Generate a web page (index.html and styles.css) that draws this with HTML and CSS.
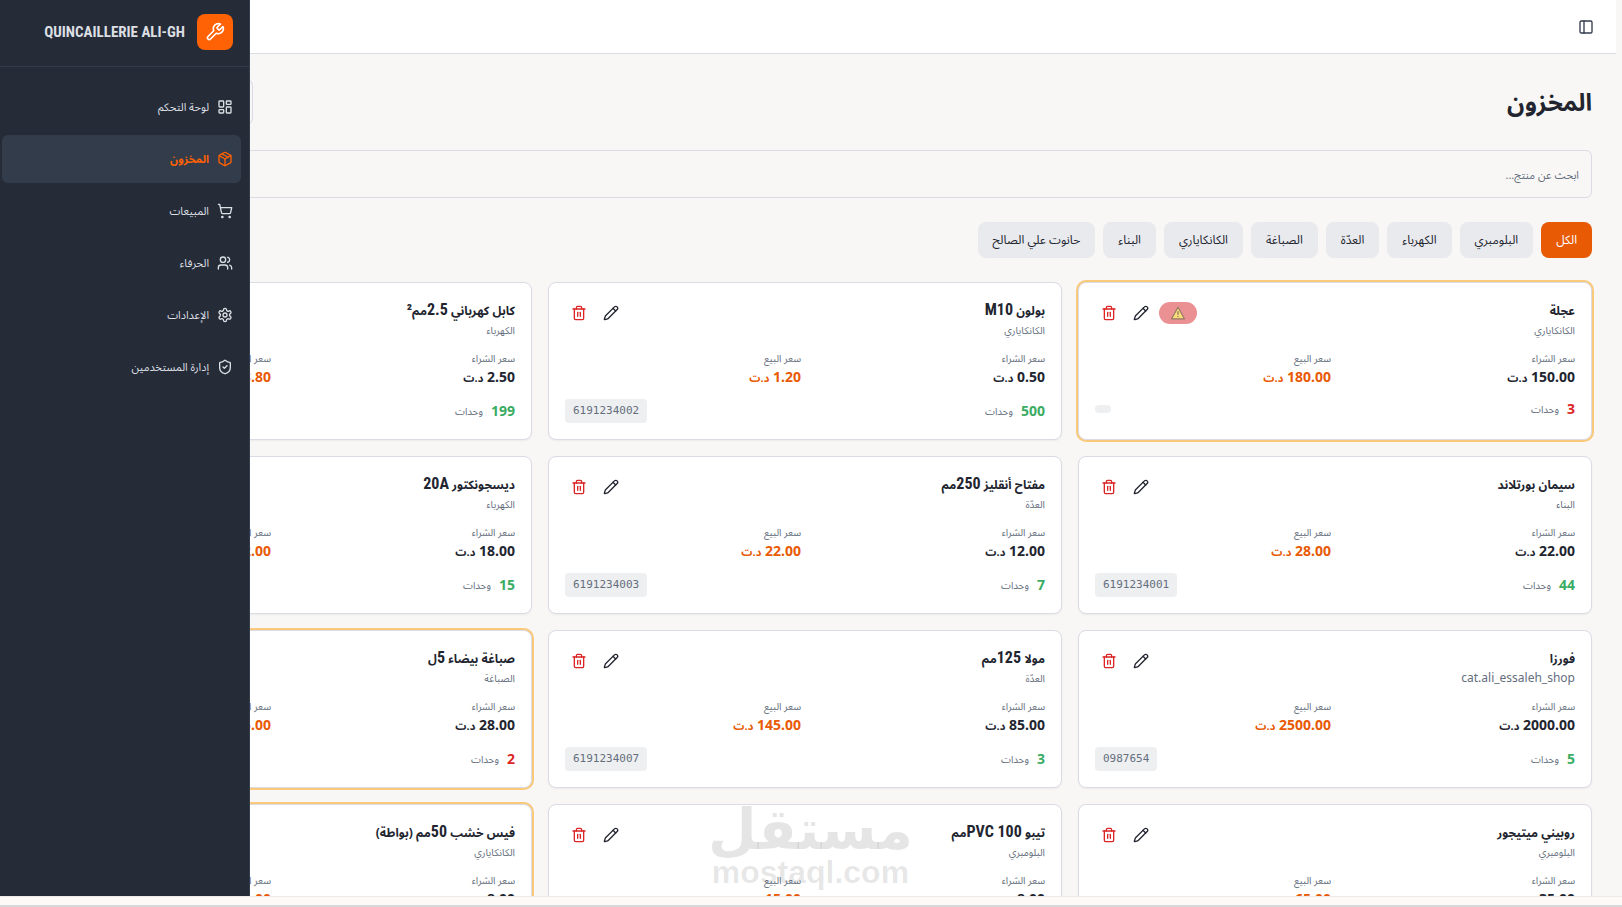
FILE: index.html
```
<!DOCTYPE html>
<html lang="ar" dir="rtl">
<head>
    <meta charset="UTF-8">
    <meta name="viewport" content="width=device-width, initial-scale=1.0">
    <title>المخزون</title>
    <link rel="stylesheet" href="styles.css">
</head>
<body>
    <!-- Shared icons -->
    <svg class="sprite" aria-hidden="true">
        <symbol id="icon-pencil" viewBox="0 0 24 24">
            <path d="M21.174 6.812a1 1 0 0 0-3.986-3.987L3.842 16.174a2 2 0 0 0-.5.83l-1.321 4.352a.5.5 0 0 0 .623.622l4.353-1.32a2 2 0 0 0 .83-.497z"/>
            <path d="m15 5 4 4"/>
        </symbol>
        <symbol id="icon-trash" viewBox="0 0 24 24">
            <path d="M3 6h18"/>
            <path d="M19 6v14c0 1-1 2-2 2H7c-1 0-2-1-2-2V6"/>
            <path d="M8 6V4c0-1 1-2 2-2h4c1 0 2 1 2 2v2"/>
            <path d="M10 11v6"/>
            <path d="M14 11v6"/>
        </symbol>
    </svg>

    <div class="app">
        <div class="page">
            <header class="topbar">
                <button class="panel-toggle" type="button" aria-label="القائمة">
                    <svg class="icon" viewBox="0 0 24 24"><rect x="3" y="3" width="18" height="18" rx="2"/><path d="M9 3v18"/></svg>
                </button>
            </header>
            <main class="content">
                <div class="page-head">
                    <h1>المخزون</h1>
                    <button class="head-action" type="button" aria-label="إضافة منتج"></button>
                </div>
                <input class="search" type="search" placeholder="ابحث عن منتج..." aria-label="ابحث عن منتج">
                <div class="chips">
                    <button class="chip active" type="button">الكل</button>
                    <button class="chip" type="button">البلومبري</button>
                    <button class="chip" type="button">الكهرباء</button>
                    <button class="chip" type="button">العدّة</button>
                    <button class="chip" type="button">الصباغة</button>
                    <button class="chip" type="button">الكانكاياري</button>
                    <button class="chip" type="button">البناء</button>
                    <button class="chip" type="button">حانوت علي الصالح</button>
                </div>
                <div class="products" id="products"></div>
            </main>
        </div>

        <aside class="sidebar">
            <div class="brand">
                <span class="brand-logo">
                    <svg class="icon" viewBox="0 0 24 24"><path d="M14.7 6.3a1 1 0 0 0 0 1.4l1.6 1.6a1 1 0 0 0 1.4 0l3.77-3.77a6 6 0 0 1-7.94 7.94l-6.91 6.91a2.12 2.12 0 0 1-3-3l6.91-6.91a6 6 0 0 1 7.94-7.94l-3.76 3.76z"/></svg>
                </span>
                <span class="brand-name">QUINCAILLERIE ALI-GH</span>
            </div>
            <nav class="nav">
                <a href="#dashboard">
                    <svg class="icon" viewBox="0 0 24 24"><rect x="3" y="3" width="7" height="9" rx="1"/><rect x="14" y="3" width="7" height="5" rx="1"/><rect x="14" y="12" width="7" height="9" rx="1"/><rect x="3" y="16" width="7" height="5" rx="1"/></svg>
                    لوحة التحكم
                </a>
                <a href="#stock" class="active">
                    <svg class="icon" viewBox="0 0 24 24"><path d="m7.5 4.27 9 5.15"/><path d="M21 8a2 2 0 0 0-1-1.73l-7-4a2 2 0 0 0-2 0l-7 4A2 2 0 0 0 3 8v8a2 2 0 0 0 1 1.73l7 4a2 2 0 0 0 2 0l7-4A2 2 0 0 0 21 16Z"/><path d="m3.3 7 8.7 5 8.7-5"/><path d="M12 22V12"/></svg>
                    المخزون
                </a>
                <a href="#sales">
                    <svg class="icon" viewBox="0 0 24 24"><circle cx="8" cy="21" r="1"/><circle cx="19" cy="21" r="1"/><path d="M2.05 2.05h2l2.66 12.42a2 2 0 0 0 2 1.58h9.78a2 2 0 0 0 1.95-1.57l1.65-7.43H5.12"/></svg>
                    المبيعات
                </a>
                <a href="#customers">
                    <svg class="icon" viewBox="0 0 24 24"><path d="M16 21v-2a4 4 0 0 0-4-4H6a4 4 0 0 0-4 4v2"/><circle cx="9" cy="7" r="4"/><path d="M22 21v-2a4 4 0 0 0-3-3.87"/><path d="M16 3.13a4 4 0 0 1 0 7.75"/></svg>
                    الحرفاء
                </a>
                <a href="#settings">
                    <svg class="icon" viewBox="0 0 24 24"><path d="M12.22 2h-.44a2 2 0 0 0-2 2v.18a2 2 0 0 1-1 1.73l-.43.25a2 2 0 0 1-2 0l-.15-.08a2 2 0 0 0-2.73.73l-.22.38a2 2 0 0 0 .73 2.73l.15.1a2 2 0 0 1 1 1.72v.51a2 2 0 0 1-1 1.74l-.15.09a2 2 0 0 0-.73 2.73l.22.38a2 2 0 0 0 2.73.73l.15-.08a2 2 0 0 1 2 0l.43.25a2 2 0 0 1 1 1.73V20a2 2 0 0 0 2 2h.44a2 2 0 0 0 2-2v-.18a2 2 0 0 1 1-1.73l.43-.25a2 2 0 0 1 2 0l.15.08a2 2 0 0 0 2.73-.73l.22-.39a2 2 0 0 0-.73-2.73l-.15-.08a2 2 0 0 1-1-1.74v-.5a2 2 0 0 1 1-1.74l.15-.09a2 2 0 0 0 .73-2.73l-.22-.38a2 2 0 0 0-2.73-.73l-.15.08a2 2 0 0 1-2 0l-.43-.25a2 2 0 0 1-1-1.73V4a2 2 0 0 0-2-2z"/><circle cx="12" cy="12" r="3"/></svg>
                    الإعدادات
                </a>
                <a href="#users">
                    <svg class="icon" viewBox="0 0 24 24"><path d="M20 13c0 5-3.5 7.5-7.66 8.95a1 1 0 0 1-.67-.01C7.5 20.5 4 18 4 13V6a1 1 0 0 1 1-1c2 0 4.5-1.2 6.24-2.72a1.17 1.17 0 0 1 1.52 0C14.51 3.81 17 5 19 5a1 1 0 0 1 1 1z"/><path d="m9 12 2 2 4-4"/></svg>
                    إدارة المستخدمين
                </a>
            </nav>
        </aside>

        <div class="watermark">
            <span class="watermark-ar">مستقل</span>
            <span class="watermark-url" dir="ltr">mostaql.com</span>
        </div>
    </div>
    <footer class="bottom-edge"></footer>
    <script src="script.js"></script>
</body>
</html>
```
FILE: styles.css
```
* {
    box-sizing: border-box;
}
body {
    margin: 0;
    height: 100vh;
    display: flex;
    flex-direction: column;
    overflow: hidden;
    background-color: #f8f7f5;
    color: #22252f;
    font-family: "Noto Sans", "Noto Sans Arabic", "DejaVu Sans", sans-serif;
    font-size: 11px;
}
button, input {
    font-family: inherit;
    color: inherit;
}
h1, h2, p {
    margin: 0;
}
.sprite {
    display: none;
}
.icon {
    width: 16px;
    height: 16px;
    flex-shrink: 0;
    fill: none;
    stroke: currentColor;
    stroke-width: 2;
    stroke-linecap: round;
    stroke-linejoin: round;
}
.app {
    position: relative;
    flex: 1;
    min-height: 0;
    overflow: hidden;
}
.page {
    width: 100%;
    margin-right: 6px;
}
.topbar {
    display: flex;
    align-items: center;
    height: 54px;
    padding: 0 16px;
    background-color: #fff;
    border-bottom: 1px solid #dadbe5;
}
.panel-toggle {
    display: flex;
    align-items: center;
    justify-content: center;
    width: 28px;
    height: 28px;
    padding: 0;
    border: none;
    background: none;
    color: #333b4d;
}
.content {
    display: flex;
    flex-direction: column;
    gap: 24px;
    padding: 24px;
}
.page-head {
    display: flex;
    align-items: center;
    justify-content: space-between;
}
.page-head h1 {
    font-size: 24px;
    line-height: 32px;
}
.head-action {
    width: 235px;
    height: 48px;
    border: 1px solid #dadbe5;
    border-radius: 8px;
    background: none;
}
.search {
    width: 100%;
    height: 48px;
    padding: 0 12px;
    border: 1px solid #dadbe5;
    border-radius: 6px;
    background: none;
    font-size: 11px;
}
.search::placeholder {
    color: #646e7d;
    opacity: 1;
}
.chips {
    display: flex;
    gap: 8px;
}
.chip {
    height: 36px;
    padding: 0 15px;
    border: none;
    border-radius: 8px;
    background-color: #e9eaee;
    font-size: 12px;
}
.chip.active {
    background-color: #e85a04;
    color: #fff;
}
/* Product cards */
.products {
    display: grid;
    grid-template-columns: repeat(3, 1fr);
    gap: 16px;
}
.card {
    display: flex;
    flex-direction: column;
    gap: 12px;
    min-height: 158px;
    padding: 16px;
    border: 1px solid #dadbe5;
    border-radius: 8px;
    background-color: #fff;
    box-shadow: 0 1px 2px rgba(0, 0, 0, 0.05);
}
.card.low {
    box-shadow: 0 0 0 2px #f9ca7c;
}
.card-head {
    display: flex;
    justify-content: space-between;
    align-items: flex-start;
}
.card h2 {
    font-size: 12px;
    line-height: 24px;
    font-weight: bold;
}
.card h2 span {
    font-family: "Roboto Condensed", "Noto Sans", sans-serif;
    font-size: 16px;
    line-height: 16px;
}
.category {
    margin-bottom: 2px;
    color: #646e7d;
    font-size: 10px;
    line-height: 14px;
}
.category:lang(en) {
    font-size: 12px;
}
.actions {
    display: flex;
    align-items: center;
    gap: 4px;
}
.actions button {
    display: flex;
    align-items: center;
    justify-content: center;
    width: 28px;
    height: 28px;
    padding: 0;
    border: none;
    background: none;
}
.actions .delete {
    color: #dc2626;
}
.badge {
    display: flex;
    align-items: center;
    justify-content: center;
    width: 38px;
    height: 22px;
    border-radius: 11px;
    background-color: #ec9193;
}
.badge svg {
    width: 14px;
    height: 14px;
}
.prices {
    display: grid;
    grid-template-columns: 1fr 1fr;
    gap: 8px;
}
.label {
    margin-bottom: 2px;
    color: #646e7d;
    font-size: 10px;
    line-height: 14px;
}
.price {
    font-size: 14px;
    line-height: 20px;
    font-weight: bold;
}
.price small {
    font-size: 11px;
    line-height: 16px;
}
.price.sell {
    color: #e85a04;
}
.stock {
    display: flex;
    align-items: center;
    justify-content: space-between;
}
.quantity {
    display: flex;
    align-items: center;
    gap: 8px;
    font-size: 10px;
    line-height: 20px;
    color: #646e7d;
}
.quantity strong {
    font-size: 14px;
    color: #3aac63;
}
.low .quantity strong {
    color: #dc2626;
}
.code {
    padding: 4px 8px;
    border-radius: 4px;
    background-color: #eeeff1;
    color: #646e7d;
    font-family: "DejaVu Sans Mono", monospace;
    font-size: 11px;
    line-height: 16px;
}
/* Sidebar lies over the page */
.sidebar {
    position: absolute;
    top: 0;
    bottom: 0;
    left: -6px;
    width: 256px;
    background-color: #252c38;
    border-right: 1px solid #323c4a;
    color: #dcdfe3;
}
.brand {
    display: flex;
    align-items: center;
    gap: 12px;
    height: 67px;
    padding: 0 16px 3px;
    border-bottom: 1px solid #323c4a;
}
.brand-logo {
    display: flex;
    align-items: center;
    justify-content: center;
    width: 36px;
    height: 36px;
    border-radius: 8px;
    background-color: #ff6105;
    color: #fff;
}
.brand-logo .icon {
    width: 20px;
    height: 20px;
}
.brand-name {
    font-family: "Roboto Condensed", "Noto Sans", sans-serif;
    font-size: 15px;
    font-weight: bold;
}
.nav {
    display: flex;
    flex-direction: column;
    gap: 4px;
    padding: 16px 8px;
}
.nav a {
    display: flex;
    align-items: center;
    gap: 8px;
    height: 48px;
    padding: 0 8px;
    border-radius: 6px;
    color: inherit;
    text-decoration: none;
}
.nav a.active {
    background-color: #323c4a;
    color: #ff6105;
    font-weight: bold;
}
.watermark {
    position: absolute;
    left: 708px;
    bottom: 4px;
    display: flex;
    flex-direction: column;
    align-items: center;
    color: rgba(0, 0, 0, 0.1);
    font-weight: bold;
    pointer-events: none;
}
.watermark-ar {
    font-family: "DejaVu Sans", sans-serif;
    font-size: 56px;
    line-height: 44px;
}
.watermark-url {
    font-family: "Liberation Sans", sans-serif;
    font-size: 32px;
    line-height: 40px;
}
.bottom-edge {
    height: 11px;
    background-color: #fdfbf8;
    border-top: 1px solid #efebe4;
    border-bottom: 2px solid #d9d9d9;
}
```
FILE: script.js
```
// buy and sell prices are in Tunisian dinars
const products = [
    { name: 'عجلة', category: 'الكانكاياري', buy: '150.00', sell: '180.00', stock: 3, code: '', low: true },
    { name: 'بولون <span>M10</span>', category: 'الكانكاياري', buy: '0.50', sell: '1.20', stock: 500, code: '6191234002' },
    { name: 'كابل كهرباني <span>2.5</span>مم<span>²</span>', category: 'الكهرباء', buy: '2.50', sell: '3.80', stock: 199, code: '6191234004' },
    { name: 'سيمان بورتلاند', category: 'البناء', buy: '22.00', sell: '28.00', stock: 44, code: '6191234001' },
    { name: 'مفتاح أنقليز <span>250</span>مم', category: 'العدّة', buy: '12.00', sell: '22.00', stock: 7, code: '6191234003' },
    { name: 'ديسجونكتور <span>20A</span>', category: 'الكهرباء', buy: '18.00', sell: '32.00', stock: 15, code: '6191234005' },
    { name: 'فورزا', category: 'cat.ali_essaleh_shop', lang: 'en', buy: '2000.00', sell: '2500.00', stock: 5, code: '0987654' },
    { name: 'مولا <span>125</span>مم', category: 'العدّة', buy: '85.00', sell: '145.00', stock: 3, code: '6191234007' },
    { name: 'صباغة بيضاء <span>5</span>ل', category: 'الصباغة', buy: '28.00', sell: '45.00', stock: 2, code: '6191234006', low: true },
    { name: 'روبيني ميتيجور', category: 'البلومبري', buy: '35.00', sell: '65.00', stock: 8, code: '6191234008' },
    { name: 'تيبو <span>PVC 100</span>مم', category: 'البلومبري', buy: '8.00', sell: '15.00', stock: 20, code: '6191234009' },
    { name: 'فيس خشب <span>50</span>مم (بواطة)', category: 'الكانكاياري', buy: '8.00', sell: '14.00', stock: 4, code: '6191234010', low: true }
];

const warning = `
    <span class="badge">
        <svg viewBox="0 0 24 24"><path d="M12 2 23 22H1Z" fill="#fbdc7c" stroke="#8f7b62" stroke-width="2" stroke-linejoin="round"/><path d="M12 9v6M12 17v2" stroke="#7b6a50" stroke-width="2"/></svg>
    </span>`;

document.getElementById('products').innerHTML = products.map(p => `
    <article class="card ${p.low ? 'low' : ''}">
        <div class="card-head">
            <div>
                <h2>${p.name}</h2>
                <p class="category" lang="${p.lang || 'ar'}">${p.category}</p>
            </div>
            <div class="actions">
                ${p.low ? warning : ''}
                <button type="button" aria-label="تعديل"><svg class="icon"><use href="#icon-pencil"/></svg></button>
                <button type="button" class="delete" aria-label="حذف"><svg class="icon"><use href="#icon-trash"/></svg></button>
            </div>
        </div>
        <div class="prices">
            <div>
                <p class="label">سعر الشراء</p>
                <p class="price">${p.buy} <small>د.ت</small></p>
            </div>
            <div>
                <p class="label">سعر البيع</p>
                <p class="price sell">${p.sell} <small>د.ت</small></p>
            </div>
        </div>
        <div class="stock">
            <span class="quantity"><strong>${p.stock}</strong>وحدات</span>
            <span class="code">${p.code}</span>
        </div>
    </article>`).join('');
```
